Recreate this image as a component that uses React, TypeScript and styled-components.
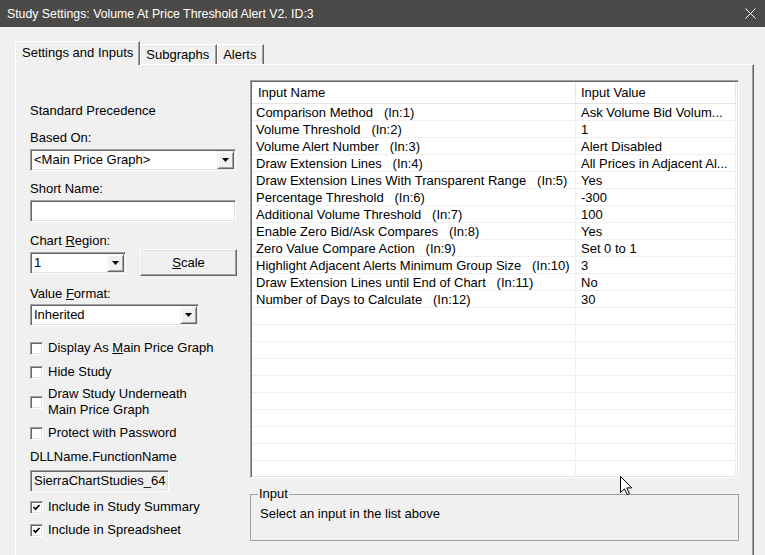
import React from "react";
import styled, { createGlobalStyle } from "styled-components";

const GlobalStyle = createGlobalStyle`
  *, *::before, *::after { box-sizing: border-box; }
  html, body { margin: 0; padding: 0; background: #f0f0f0; }
  body {
    font-family: "Liberation Sans", Arial, sans-serif;
    font-size: 13px;
    color: #000;
  }
`;

const Window = styled.div`
  position: relative;
  width: 765px;
  height: 555px;
  overflow: hidden;
  background: #f0f0f0;
  display: flex;
  flex-direction: column;
`;

const TitleBar = styled.div`
  flex: none;
  height: 27px;
  background: #4c4a48;
  color: #ffffff;
  font-size: 12.3px;
  display: flex;
  align-items: center;
  justify-content: space-between;
  padding: 0 9px 0 7px;
`;

const Title = styled.span`
  white-space: nowrap;
`;

const Body = styled.div`
  flex: 1;
  display: flex;
  flex-direction: column;
  padding: 14px 11px 0 15px;
  min-height: 0;
`;

const TabStrip = styled.div`
  height: 23px;
  display: flex;
  align-items: flex-end;
  position: relative;
  z-index: 1;
`;

const Tab = styled.div<{ $active?: boolean }>`
  height: ${(p) => (p.$active ? 24 : 20)}px;
  margin-bottom: ${(p) => (p.$active ? -1 : 0)}px;
  padding: ${(p) => (p.$active ? "0 6px 2px 6px" : "0 7px 0 5px")};
  display: flex;
  align-items: center;
  line-height: 16px;
  white-space: nowrap;
  background: #f0f0f0;
  border-top: 1px solid #ffffff;
  border-left: 1px solid #ffffff;
  border-right: 1px solid #696969;
  box-shadow: inset -1px 0 0 #a0a0a0;
`;

const Panel = styled.div`
  flex: 1;
  display: flex;
  gap: 13px;
  padding-left: 14px;
  border-top: 1px solid #ffffff;
  border-left: 1px solid #ffffff;
  border-right: 1px solid #696969;
  box-shadow: inset -1px 0 0 #a0a0a0;
  min-height: 0;
`;

const LeftCol = styled.div`
  width: 207px;
  flex: none;
  display: flex;
  flex-direction: column;
  align-items: flex-start;
  padding-top: 38px;
`;

const Label = styled.div<{ $mt?: number }>`
  line-height: 16px;
  margin-top: ${(p) => p.$mt ?? 0}px;
  white-space: nowrap;
`;

const Sunken = styled.div<{ $w: number; $mt?: number; $ro?: boolean }>`
  width: ${(p) => p.$w}px;
  height: 22px;
  flex: none;
  margin-top: ${(p) => p.$mt ?? 0}px;
  background: ${(p) => (p.$ro ? "#f0f0f0" : "#ffffff")};
  border-top: 1px solid #a0a0a0;
  border-left: 1px solid #a0a0a0;
  border-right: 1px solid #ffffff;
  border-bottom: 1px solid #ffffff;
  box-shadow: inset 1px 1px 0 #696969, inset -1px -1px 0 #e3e3e3;
  padding: 1px 1px 1px 2px;
  display: flex;
  align-items: center;
  overflow: hidden;
`;

const FieldText = styled.span`
  flex: 1;
  padding-left: 1px;
  line-height: 16px;
  white-space: nowrap;
  overflow: hidden;
`;

const ComboButton = styled.span`
  flex: none;
  width: 17px;
  height: 18px;
  background: #f0f0f0;
  border-top: 1px solid #f0f0f0;
  border-left: 1px solid #f0f0f0;
  border-right: 1px solid #696969;
  border-bottom: 1px solid #696969;
  box-shadow: inset 1px 1px 0 #ffffff, inset -1px -1px 0 #a0a0a0;
  display: flex;
  align-items: center;
  justify-content: center;
`;

const ControlRow = styled.div`
  width: 207px;
  height: 27px;
  display: flex;
  align-items: center;
  justify-content: space-between;
`;

const PushButton = styled.div`
  width: 97px;
  height: 27px;
  background: #f0f0f0;
  border-top: 1px solid #ffffff;
  border-left: 1px solid #ffffff;
  border-right: 1px solid #696969;
  border-bottom: 1px solid #696969;
  box-shadow: inset -1px -1px 0 #a0a0a0, inset 1px 1px 0 #e3e3e3;
  display: flex;
  align-items: center;
  justify-content: center;
  line-height: 16px;
`;

const Check = styled.div<{ $mt?: number }>`
  display: flex;
  align-items: center;
  gap: 5px;
  margin-top: ${(p) => p.$mt ?? 0}px;
  line-height: 16px;
  white-space: nowrap;
`;

const CheckBox = styled.span`
  flex: none;
  width: 13px;
  height: 13px;
  background: #ffffff;
  border-top: 1px solid #a0a0a0;
  border-left: 1px solid #a0a0a0;
  border-right: 1px solid #ffffff;
  border-bottom: 1px solid #ffffff;
  box-shadow: inset 1px 1px 0 #696969, inset -1px -1px 0 #e3e3e3;
  display: flex;
  align-items: center;
  justify-content: center;
`;

const RightCol = styled.div`
  width: 489px;
  flex: none;
  display: flex;
  flex-direction: column;
  padding-top: 15px;
`;

const ListView = styled.div`
  height: 398px;
  flex: none;
  background: #ffffff;
  border-top: 1px solid #a0a0a0;
  border-left: 1px solid #a0a0a0;
  border-right: 1px solid #ffffff;
  border-bottom: 1px solid #ffffff;
  box-shadow: inset 1px 1px 0 #696969, inset -1px -1px 0 #e3e3e3;
  padding: 1px;
  overflow: hidden;
  display: flex;
  flex-direction: column;
`;

const GridRow = styled.div<{ $header?: boolean }>`
  flex: none;
  display: grid;
  grid-template-columns: 324px 160px 1fr;
  height: ${(p) => (p.$header ? 22 : 17)}px;
  border-bottom: 1px solid ${(p) => (p.$header ? "#e5e5e5" : "#f0f0f0")};
`;

const HeadCell = styled.div<{ $pl: number }>`
  padding-left: ${(p) => p.$pl}px;
  border-right: 1px solid #e5e5e5;
  display: flex;
  align-items: center;
  line-height: 16px;
  white-space: nowrap;
  overflow: hidden;
`;

const Cell = styled.div<{ $pl: number }>`
  padding-left: ${(p) => p.$pl}px;
  padding-top: 1px;
  border-right: 1px solid #f0f0f0;
  line-height: 16px;
  white-space: pre;
  overflow: hidden;
`;

const GroupBox = styled.fieldset`
  margin: 8px 0 0 0;
  padding: 0 8px 0 7px;
  height: 55px;
  min-width: 0;
  border: 1px solid #a0a0a0;
`;

const Legend = styled.legend`
  padding: 0 1px;
  line-height: 16px;
  font-size: 13px;
`;

const GroupText = styled.div`
  margin: 4px 0 0 2px;
  line-height: 16px;
`;

const Pointer = styled.svg`
  position: absolute;
  left: 620px;
  top: 476px;
`;

const Arrow = () => (
  <svg width="7" height="4" viewBox="0 0 7 4">
    <polygon points="0,0 7,0 3.5,4" fill="#000" />
  </svg>
);

const Tick = () => (
  <svg width="9" height="9" viewBox="0 0 9 9">
    <polyline points="1.5,4 3.5,6.2 7.5,2" fill="none" stroke="#000" strokeWidth="1.7" />
  </svg>
);

const rows: [string, string][] = [
  ["Comparison Method   (In:1)", "Ask Volume Bid Volum..."],
  ["Volume Threshold   (In:2)", "1"],
  ["Volume Alert Number   (In:3)", "Alert Disabled"],
  ["Draw Extension Lines   (In:4)", "All Prices in Adjacent Al..."],
  ["Draw Extension Lines With Transparent Range   (In:5)", "Yes"],
  ["Percentage Threshold   (In:6)", "-300"],
  ["Additional Volume Threshold   (In:7)", "100"],
  ["Enable Zero Bid/Ask Compares   (In:8)", "Yes"],
  ["Zero Value Compare Action   (In:9)", "Set 0 to 1"],
  ["Highlight Adjacent Alerts Minimum Group Size   (In:10)", "3"],
  ["Draw Extension Lines until End of Chart   (In:11)", "No"],
  ["Number of Days to Calculate   (In:12)", "30"],
];

const allRows: [string, string][] = [
  ...rows,
  ...Array.from({ length: 10 }, () => ["", ""] as [string, string]),
];

export default function App() {
  return (
    <>
      <GlobalStyle />
      <Window>
        <TitleBar>
          <Title>Study Settings: Volume At Price Threshold Alert V2. ID:3</Title>
          <svg width="11" height="11" viewBox="0 0 11 11">
            <path d="M0.5 0.5 L10.5 10.5 M10.5 0.5 L0.5 10.5" stroke="#ffffff" strokeWidth="1" />
          </svg>
        </TitleBar>
        <Body>
          <TabStrip>
            <Tab $active>Settings and Inputs</Tab>
            <Tab>Subgraphs</Tab>
            <Tab>Alerts</Tab>
          </TabStrip>
          <Panel>
            <LeftCol>
              <Label>Standard Precedence</Label>
              <Label $mt={11}>Based On:</Label>
              <Sunken $w={206} $mt={3}>
                <FieldText>&lt;Main Price Graph&gt;</FieldText>
                <ComboButton>
                  <Arrow />
                </ComboButton>
              </Sunken>
              <Label $mt={10}>Short Name:</Label>
              <Sunken $w={206} $mt={3} />
              <Label $mt={11}>
                Chart <u>R</u>egion:
              </Label>
              <ControlRow>
                <Sunken $w={96}>
                  <FieldText>1</FieldText>
                  <ComboButton>
                    <Arrow />
                  </ComboButton>
                </Sunken>
                <PushButton>
                  <span>
                    <u>S</u>cale
                  </span>
                </PushButton>
              </ControlRow>
              <Label $mt={10}>
                Value <u>F</u>ormat:
              </Label>
              <Sunken $w={169} $mt={2}>
                <FieldText>Inherited</FieldText>
                <ComboButton>
                  <Arrow />
                </ComboButton>
              </Sunken>
              <Check $mt={14}>
                <CheckBox />
                <span>
                  Display As <u>M</u>ain Price Graph
                </span>
              </Check>
              <Check $mt={8}>
                <CheckBox />
                <span>Hide Study</span>
              </Check>
              <Check $mt={6}>
                <CheckBox />
                <span>
                  Draw Study Underneath
                  <br />
                  Main Price Graph
                </span>
              </Check>
              <Check $mt={7}>
                <CheckBox />
                <span>Protect with Password</span>
              </Check>
              <Label $mt={8}>DLLName.FunctionName</Label>
              <Sunken $w={139} $mt={5} $ro>
                <FieldText>SierraChartStudies_64.dll</FieldText>
              </Sunken>
              <Check $mt={7}>
                <CheckBox>
                  <Tick />
                </CheckBox>
                <span>Include in Study Summary</span>
              </Check>
              <Check $mt={7}>
                <CheckBox>
                  <Tick />
                </CheckBox>
                <span>Include in Spreadsheet</span>
              </Check>
            </LeftCol>
            <RightCol>
              <ListView>
                <GridRow $header>
                  <HeadCell $pl={6}>Input Name</HeadCell>
                  <HeadCell $pl={5}>Input Value</HeadCell>
                  <span />
                </GridRow>
                {allRows.map(([name, value], i) => (
                  <GridRow key={i}>
                    <Cell $pl={4}>{name}</Cell>
                    <Cell $pl={5}>{value}</Cell>
                    <span />
                  </GridRow>
                ))}
              </ListView>
              <GroupBox>
                <Legend>Input</Legend>
                <GroupText>Select an input in the list above</GroupText>
              </GroupBox>
            </RightCol>
          </Panel>
        </Body>
        <Pointer width="13" height="20" viewBox="0 0 13 20">
          <path
            d="M0.5 0.5 L0.5 16.5 L4.5 12.8 L7.2 18.8 L9.4 17.8 L6.8 11.9 L11.8 11.9 Z"
            fill="#ffffff"
            stroke="#000000"
            strokeWidth="1"
            strokeLinejoin="miter"
          />
        </Pointer>
      </Window>
    </>
  );
}
